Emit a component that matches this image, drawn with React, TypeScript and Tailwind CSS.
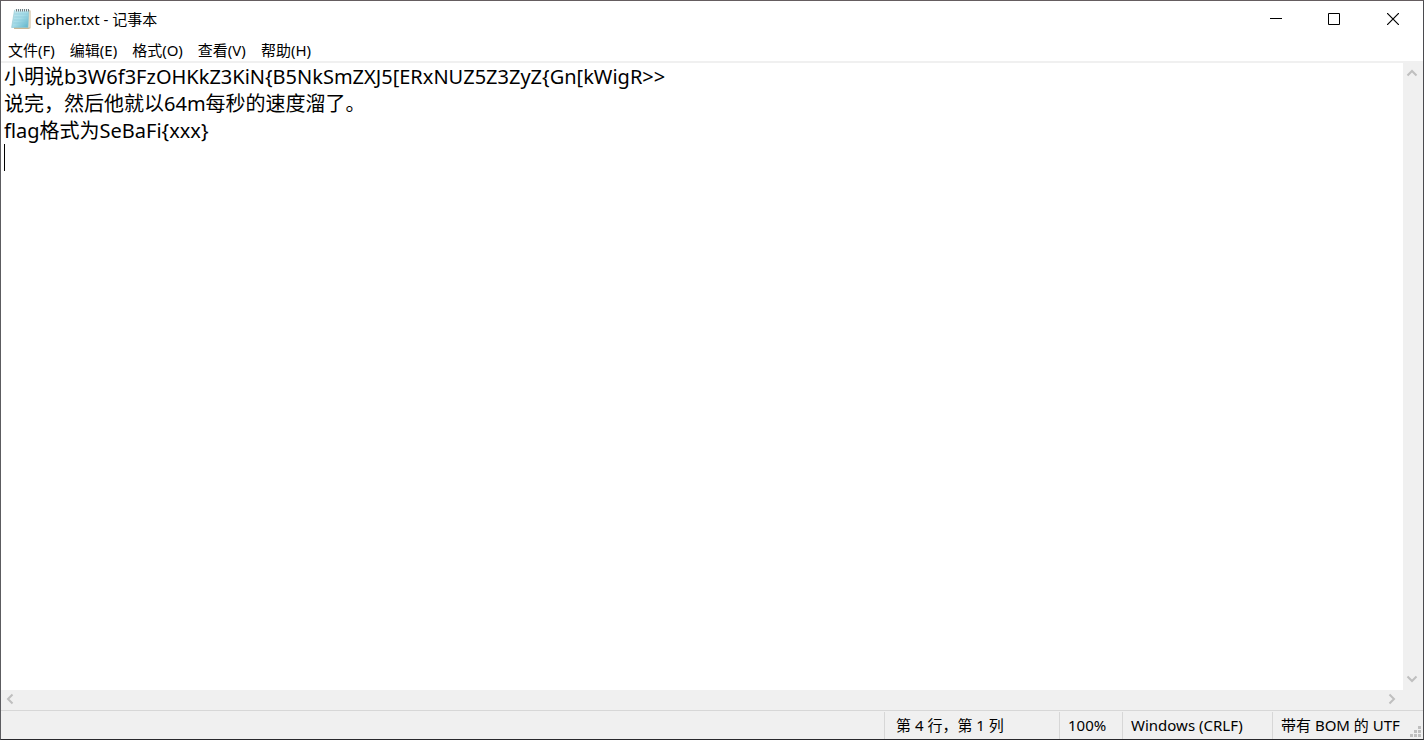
import { useState } from "react";

/* -------------------- Data -------------------- */

const MENUS = ["文件(F)", "编辑(E)", "格式(O)", "查看(V)", "帮助(H)"];

const INITIAL_TEXT = `小明说b3W6f3FzOHKkZ3KiN{B5NkSmZXJ5[ERxNUZ5Z3ZyZ{Gn[kWigR>>
说完，然后他就以64m每秒的速度溜了。
flag格式为SeBaFi{xxx}
`;

/* -------------------- Icons -------------------- */

function NotepadIcon() {
  return (
    <svg width="20" height="22" viewBox="0 0 20 22" aria-hidden="true">
      <defs>
        <linearGradient id="pad" x1="0" y1="0" x2="1" y2="1">
          <stop offset="0" stopColor="#c9e9f0" />
          <stop offset="0.5" stopColor="#a5dbe7" />
          <stop offset="1" stopColor="#5cb3ca" />
        </linearGradient>
      </defs>
      <path d="M4 2.5h15.5v17.8l-2 .7H3z" fill="#c9b795" />
      <path d="M4.5 2.5h14.3v17H3z" fill="#e9e2d2" />
      <path d="M3.5 2.2h14.3L17 19.5H.6z" fill="url(#pad)" stroke="#8cc3cf" strokeWidth="0.6" />
      <path d="M3.5 6h13.6M3.2 9h13.6M2.9 12h13.6M2.3 15h13.6" stroke="#86c8d8" strokeWidth="0.6" />
      <path d="M4 2.2h14" stroke="#e8f2f4" strokeWidth="2" />
      <path d="M5.5 1v2.5M7.5 1v2.5M9.5 1v2.5M11.5 1v2.5M13.5 1v2.5M15.5 1v2.5M17.5 1v2.5" stroke="#727f84" />
    </svg>
  );
}

function Chevron({ d }: { d: string }) {
  return (
    <svg width="12" height="12" viewBox="0 0 12 12" fill="none" stroke="#bfbfbf" strokeWidth="2" aria-hidden="true">
      <path d={d} />
    </svg>
  );
}

function SizeGrip() {
  return (
    <svg
      className="absolute right-0 bottom-0"
      width="14"
      height="14"
      viewBox="0 0 14 14"
      fill="#bfbfbf"
      aria-hidden="true"
    >
      <path d="M9 1h3v3H9zM9 5h3v3H9zM9 9h3v3H9zM5 5h3v3H5zM5 9h3v3H5zM1 9h3v3H1z" />
    </svg>
  );
}

/* -------------------- Title bar -------------------- */

function TitleBar() {
  return (
    <header className="flex h-9 items-center justify-between">
      <div className="flex items-center gap-1 pl-[10px]">
        <NotepadIcon />
        <h1 className="text-[15px] leading-5">cipher.txt - 记事本</h1>
      </div>

      <div className="flex h-full">
        <button className="flex w-[58px] items-center justify-center" aria-label="最小化">
          <svg width="12" height="12" viewBox="0 0 12 12" aria-hidden="true">
            <path d="M0 5.5h12" stroke="#000" />
          </svg>
        </button>
        <button className="flex w-[58px] items-center justify-center" aria-label="最大化">
          <svg width="12" height="12" viewBox="0 0 12 12" fill="none" aria-hidden="true">
            <path d="M.5.5h11v11H.5z" stroke="#000" />
          </svg>
        </button>
        <button className="flex w-[60px] items-center justify-center" aria-label="关闭">
          <svg width="12" height="12" viewBox="0 0 12 12" aria-hidden="true">
            <path d="M0 0l12 12M12 0L0 12" stroke="#000" strokeWidth="1.2" />
          </svg>
        </button>
      </div>
    </header>
  );
}

/* -------------------- Status bar -------------------- */

function StatusBar() {
  return (
    <footer className="relative flex h-[29px] justify-end border-t border-[#d7d7d7] bg-[#f0f0f0] text-[15px] leading-[26px]">
      <div className="mt-px w-[175px] border-l border-[#d7d7d7] pl-[11px]">第 4 行，第 1 列</div>
      <div className="mt-px w-[63px] border-l border-[#d7d7d7] pl-2">100%</div>
      <div className="mt-px w-[150px] border-l border-[#d7d7d7] pl-2">Windows (CRLF)</div>
      <div className="mt-px w-[151px] border-l border-[#d7d7d7] pl-2">带有 BOM 的 UTF</div>
      <SizeGrip />
    </footer>
  );
}

/* -------------------- Window -------------------- */

export default function App() {
  const [text, setText] = useState(INITIAL_TEXT);

  return (
    <div className="flex h-screen flex-col border border-t-[#655d60] border-r-[#4b4b4f] border-b-[#28282c] border-l-[#5c5c60] bg-white font-['Noto_Sans','Noto_Sans_CJK_SC',sans-serif] text-black">
      <TitleBar />

      <nav className="flex h-[26px] items-center gap-[15px] border-b-2 border-[#f0f0f0] pt-0.5 pl-[7px]">
        {MENUS.map((m) => (
          <button key={m} className="text-[15px] leading-5">
            {m}
          </button>
        ))}
      </nav>

      <main className="grid min-h-0 flex-1 grid-cols-[1fr_20px] grid-rows-[1fr_20px] bg-[#f0f0f0]">
        <div className="relative bg-white">
          <textarea
            aria-label="文本编辑器"
            className="block h-full w-full resize-none overflow-hidden bg-white pl-[3px] text-[20px] leading-[27px] whitespace-pre caret-transparent outline-none"
            spellCheck={false}
            value={text}
            onChange={(e) => setText(e.target.value)}
          />
          {/* Text cursor */}
          <span className="absolute top-[81px] left-[3px] h-[27px] w-px bg-black" />
        </div>

        <div className="flex flex-col items-start justify-between pt-1 pb-[5px] pl-[3px]">
          <button aria-label="向上滚动">
            <Chevron d="M1.5 8.5L6 4l4.5 4.5" />
          </button>
          <button aria-label="向下滚动">
            <Chevron d="M1.5 3.5L6 8l4.5-4.5" />
          </button>
        </div>

        <div className="flex items-start justify-between pt-[3px] pr-[5px] pl-[3px]">
          <button aria-label="向左滚动">
            <Chevron d="M8.5 1.5L4 6l4.5 4.5" />
          </button>
          <button aria-label="向右滚动">
            <Chevron d="M3.5 1.5L8 6l-4.5 4.5" />
          </button>
        </div>
      </main>

      <StatusBar />
    </div>
  );
}
